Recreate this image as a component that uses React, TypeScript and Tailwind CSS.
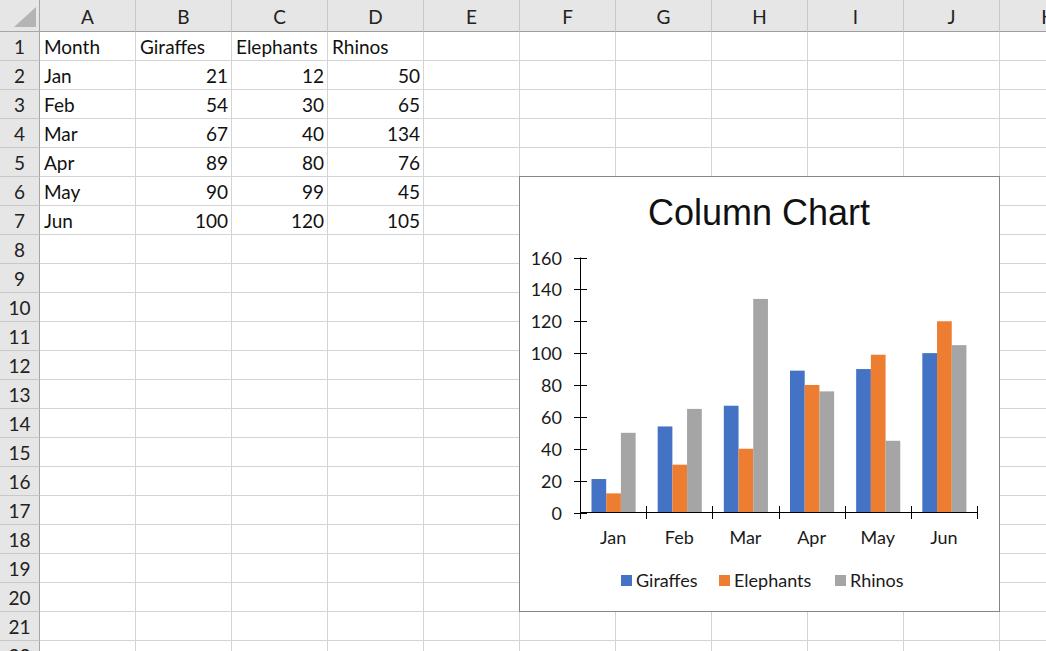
import React from 'react';

type Row = { month: string; giraffes: number; elephants: number; rhinos: number };

const DATA: Row[] = [
  { month: 'Jan', giraffes: 21, elephants: 12, rhinos: 50 },
  { month: 'Feb', giraffes: 54, elephants: 30, rhinos: 65 },
  { month: 'Mar', giraffes: 67, elephants: 40, rhinos: 134 },
  { month: 'Apr', giraffes: 89, elephants: 80, rhinos: 76 },
  { month: 'May', giraffes: 90, elephants: 99, rhinos: 45 },
  { month: 'Jun', giraffes: 100, elephants: 120, rhinos: 105 },
];

const COLUMNS = ['A', 'B', 'C', 'D', 'E', 'F', 'G', 'H', 'I', 'J', 'K'];
const ROW_COUNT = 22;

const SERIES = [
  { key: 'giraffes' as const, label: 'Giraffes', color: '#4472c4' },
  { key: 'elephants' as const, label: 'Elephants', color: '#ed7d31' },
  { key: 'rhinos' as const, label: 'Rhinos', color: '#a5a5a5' },
];

// cell contents by [row][col], row 1 is the header line of the table
function cellValue(row: number, col: number): { text: string; right?: boolean } | null {
  if (row === 1) {
    const head = ['Month', 'Giraffes', 'Elephants', 'Rhinos'];
    return col < 4 ? { text: head[col] } : null;
  }
  const d = DATA[row - 2];
  if (!d || col > 3) return null;
  if (col === 0) return { text: d.month };
  const v = [d.giraffes, d.elephants, d.rhinos][col - 1];
  return { text: String(v), right: true };
}

function ColumnChart() {
  const axisX = 60.5;
  const baseY = 335.5;
  const topY = 80.5;
  const plotRight = 457;
  const band = (plotRight - 60) / DATA.length;
  const barW = 14.7;
  const yFor = (v: number) => baseY - (v * (baseY - topY)) / 160;
  const ticks = [0, 20, 40, 60, 80, 100, 120, 140, 160];
  const label = { fontFamily: 'Lato, sans-serif', fontSize: 18, fill: '#1a1a1a' };

  return (
    <svg width={479} height={434} className="block">
      <text
        x={239}
        y={35}
        textAnchor="middle"
        dominantBaseline="central"
        fontFamily="'Liberation Sans', Arial, sans-serif"
        fontSize={36}
        fill="#111"
      >
        Column Chart
      </text>

      {/* bars */}
      {DATA.map((d, i) => {
        const start = 60 + i * band + 11.5;
        return SERIES.map((s, j) => {
          const v = d[s.key];
          const y = yFor(v);
          return (
            <rect
              key={`${d.month}-${s.key}`}
              x={start + j * barW}
              y={y}
              width={barW}
              height={baseY - y}
              fill={s.color}
            />
          );
        });
      })}

      {/* value axis */}
      <line x1={axisX} y1={topY} x2={axisX} y2={baseY} stroke="#000" strokeWidth={1} />
      {ticks.map((t) => {
        const y = Math.round(yFor(t)) + 0.5;
        return (
          <g key={t}>
            <line x1={54} y1={y} x2={67} y2={y} stroke="#000" strokeWidth={1} />
            <text x={42} y={y - 1} textAnchor="end" dominantBaseline="central" {...label}>
              {t}
            </text>
          </g>
        );
      })}

      {/* category axis */}
      <line x1={60} y1={baseY} x2={plotRight + 1} y2={baseY} stroke="#000" strokeWidth={1} />
      {Array.from({ length: DATA.length + 1 }).map((_, i) => {
        const x = Math.round(60 + i * band) + 0.5;
        return <line key={i} x1={x} y1={329} x2={x} y2={342} stroke="#000" strokeWidth={1} />;
      })}
      {DATA.map((d, i) => (
        <text
          key={d.month}
          x={60 + i * band + band / 2}
          y={360}
          textAnchor="middle"
          dominantBaseline="central"
          {...label}
        >
          {d.month}
        </text>
      ))}

      {/* legend */}
      {SERIES.map((s, i) => {
        const x = [101, 199, 315][i];
        return (
          <g key={s.key}>
            <rect x={x} y={398} width={11} height={11} fill={s.color} />
            <text x={x + 15} y={403} dominantBaseline="central" {...label}>
              {s.label}
            </text>
          </g>
        );
      })}
    </svg>
  );
}

export default function App() {
  return (
    <div className="relative w-[1046px] h-[651px] overflow-hidden bg-white font-['Lato',sans-serif] text-[19px] text-[#111]">
      <div className="grid grid-cols-[40px_repeat(11,96px)] w-max">
        {/* corner */}
        <div className="h-[32px] bg-[#e6e6e6] border-r border-b border-[#a6a6a6] flex items-end justify-end pr-[3px] pb-[4px]">
          <svg width={22} height={20}>
            <polygon points="0,20 22,20 22,0" fill="#b4b4b4" />
          </svg>
        </div>
        {COLUMNS.map((c) => (
          <div
            key={c}
            className="h-[32px] pt-[4px] bg-[#e6e6e6] border-r border-r-[#c8c8c8] border-b border-b-[#9e9e9e] flex items-center justify-center text-[#222]"
          >
            {c}
          </div>
        ))}

        {Array.from({ length: ROW_COUNT }).map((_, r) => {
          const row = r + 1;
          return (
            <React.Fragment key={row}>
              <div className="h-[29px] pt-[2px] bg-[#e6e6e6] border-r border-r-[#a6a6a6] border-b border-b-[#c8c8c8] flex items-center justify-center text-[#222]">
                {row}
              </div>
              {COLUMNS.map((c, ci) => {
                const v = cellValue(row, ci);
                return (
                  <div
                    key={c}
                    className={`h-[29px] pt-[2px] border-r border-b border-[#d4d4d4] flex items-center whitespace-nowrap overflow-visible ${
                      v?.right ? 'justify-end pr-[3px]' : 'justify-start pl-[4px]'
                    }`}
                  >
                    {v?.text}
                  </div>
                );
              })}
            </React.Fragment>
          );
        })}
      </div>

      {/* embedded chart */}
      <div className="absolute left-[519px] top-[176px] w-[481px] h-[436px] border border-[#868686] bg-white">
        <ColumnChart />
      </div>
    </div>
  );
}
